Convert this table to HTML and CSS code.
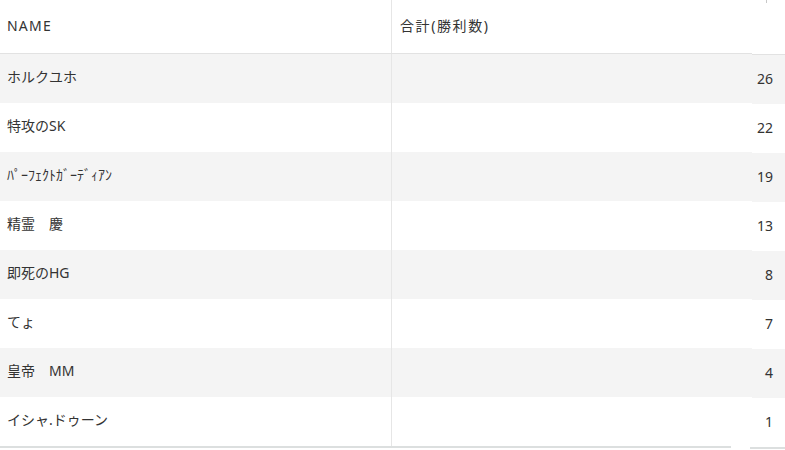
FILE: index.html
```html
<!DOCTYPE html>
<html lang="ja">
<head>
<meta charset="utf-8">
<title>ranking</title>
<link rel="stylesheet" href="styles.css">
</head>
<body>
<div class="wrap">
  <div class="main">
    <div class="row head">
      <div class="cell name">NAME</div>
      <div class="cell total">合計(勝利数)</div>
    </div>
    <div class="row odd"><div class="cell name">ホルクユホ</div><div class="cell total"></div></div>
    <div class="row"><div class="cell name">特攻のSK</div><div class="cell total"></div></div>
    <div class="row odd"><div class="cell name">ﾊﾟｰﾌｪｸﾄｶﾞｰﾃﾞｨｱﾝ</div><div class="cell total"></div></div>
    <div class="row"><div class="cell name">精霊　慶</div><div class="cell total"></div></div>
    <div class="row odd"><div class="cell name">即死のHG</div><div class="cell total"></div></div>
    <div class="row"><div class="cell name">てょ</div><div class="cell total"></div></div>
    <div class="row odd"><div class="cell name">皇帝　MM</div><div class="cell total"></div></div>
    <div class="row"><div class="cell name">イシャ.ドゥーン</div><div class="cell total"></div></div>
    <div class="foot"></div>
  </div>
  <div class="side">
    <div class="shead"><span class="tick"></span></div>
    <div class="num odd">26</div>
    <div class="num">22</div>
    <div class="num odd">19</div>
    <div class="num">13</div>
    <div class="num odd">8</div>
    <div class="num">7</div>
    <div class="num odd">4</div>
    <div class="num">1</div>
    <div class="sfoot"></div>
  </div>
</div>
</body>
</html>
```
FILE: styles.css
```css
html, body {
  margin: 0;
  padding: 0;
  background: #ffffff;
}
body {
  font-family: "Noto Sans", "Noto Sans CJK JP", sans-serif;
  color: #333333;
  font-size: 14px;
}
.wrap {
  display: flex;
  width: 785px;
}
.main {
  width: 752px;
  display: flex;
  flex-direction: column;
}
.row {
  display: flex;
  height: 49px;
}
.row.odd {
  background: #f4f4f4;
}
.row.head {
  height: 53px;
  border-bottom: 1px solid #e2e2e2;
}
.cell {
  display: flex;
  align-items: center;
  box-sizing: border-box;
  padding-bottom: 5px;
}
.cell.name {
  width: 392px;
  padding-left: 7px;
  border-right: 1px solid #e6e6e6;
}
.cell.total {
  flex: 1;
  padding-left: 8px;
}
.head .cell {
  font-size: 14px;
  letter-spacing: 1.2px;
  padding-bottom: 3px;
}
.head .cell.total {
  letter-spacing: 1.6px;
}
.foot {
  width: 731px;
  height: 2px;
  background: #dcdfdf;
}
.side {
  flex: 1;
  display: flex;
  flex-direction: column;
  padding-top: 1px;
}
.shead {
  height: 53px;
  border-bottom: 1px solid #e2e2e2;
  position: relative;
}
.tick {
  position: absolute;
  left: 14px;
  top: -1px;
  width: 1px;
  height: 3px;
  background: #c8c8c8;
}
.num {
  box-sizing: border-box;
  height: 49px;
  display: flex;
  align-items: center;
  justify-content: flex-end;
  padding-right: 12px;
  padding-bottom: 2px;
}
.num.odd {
  background: #f4f4f4;
}
.sfoot {
  margin-left: -2px;
  height: 2px;
  background: #dcdfdf;
}
```
